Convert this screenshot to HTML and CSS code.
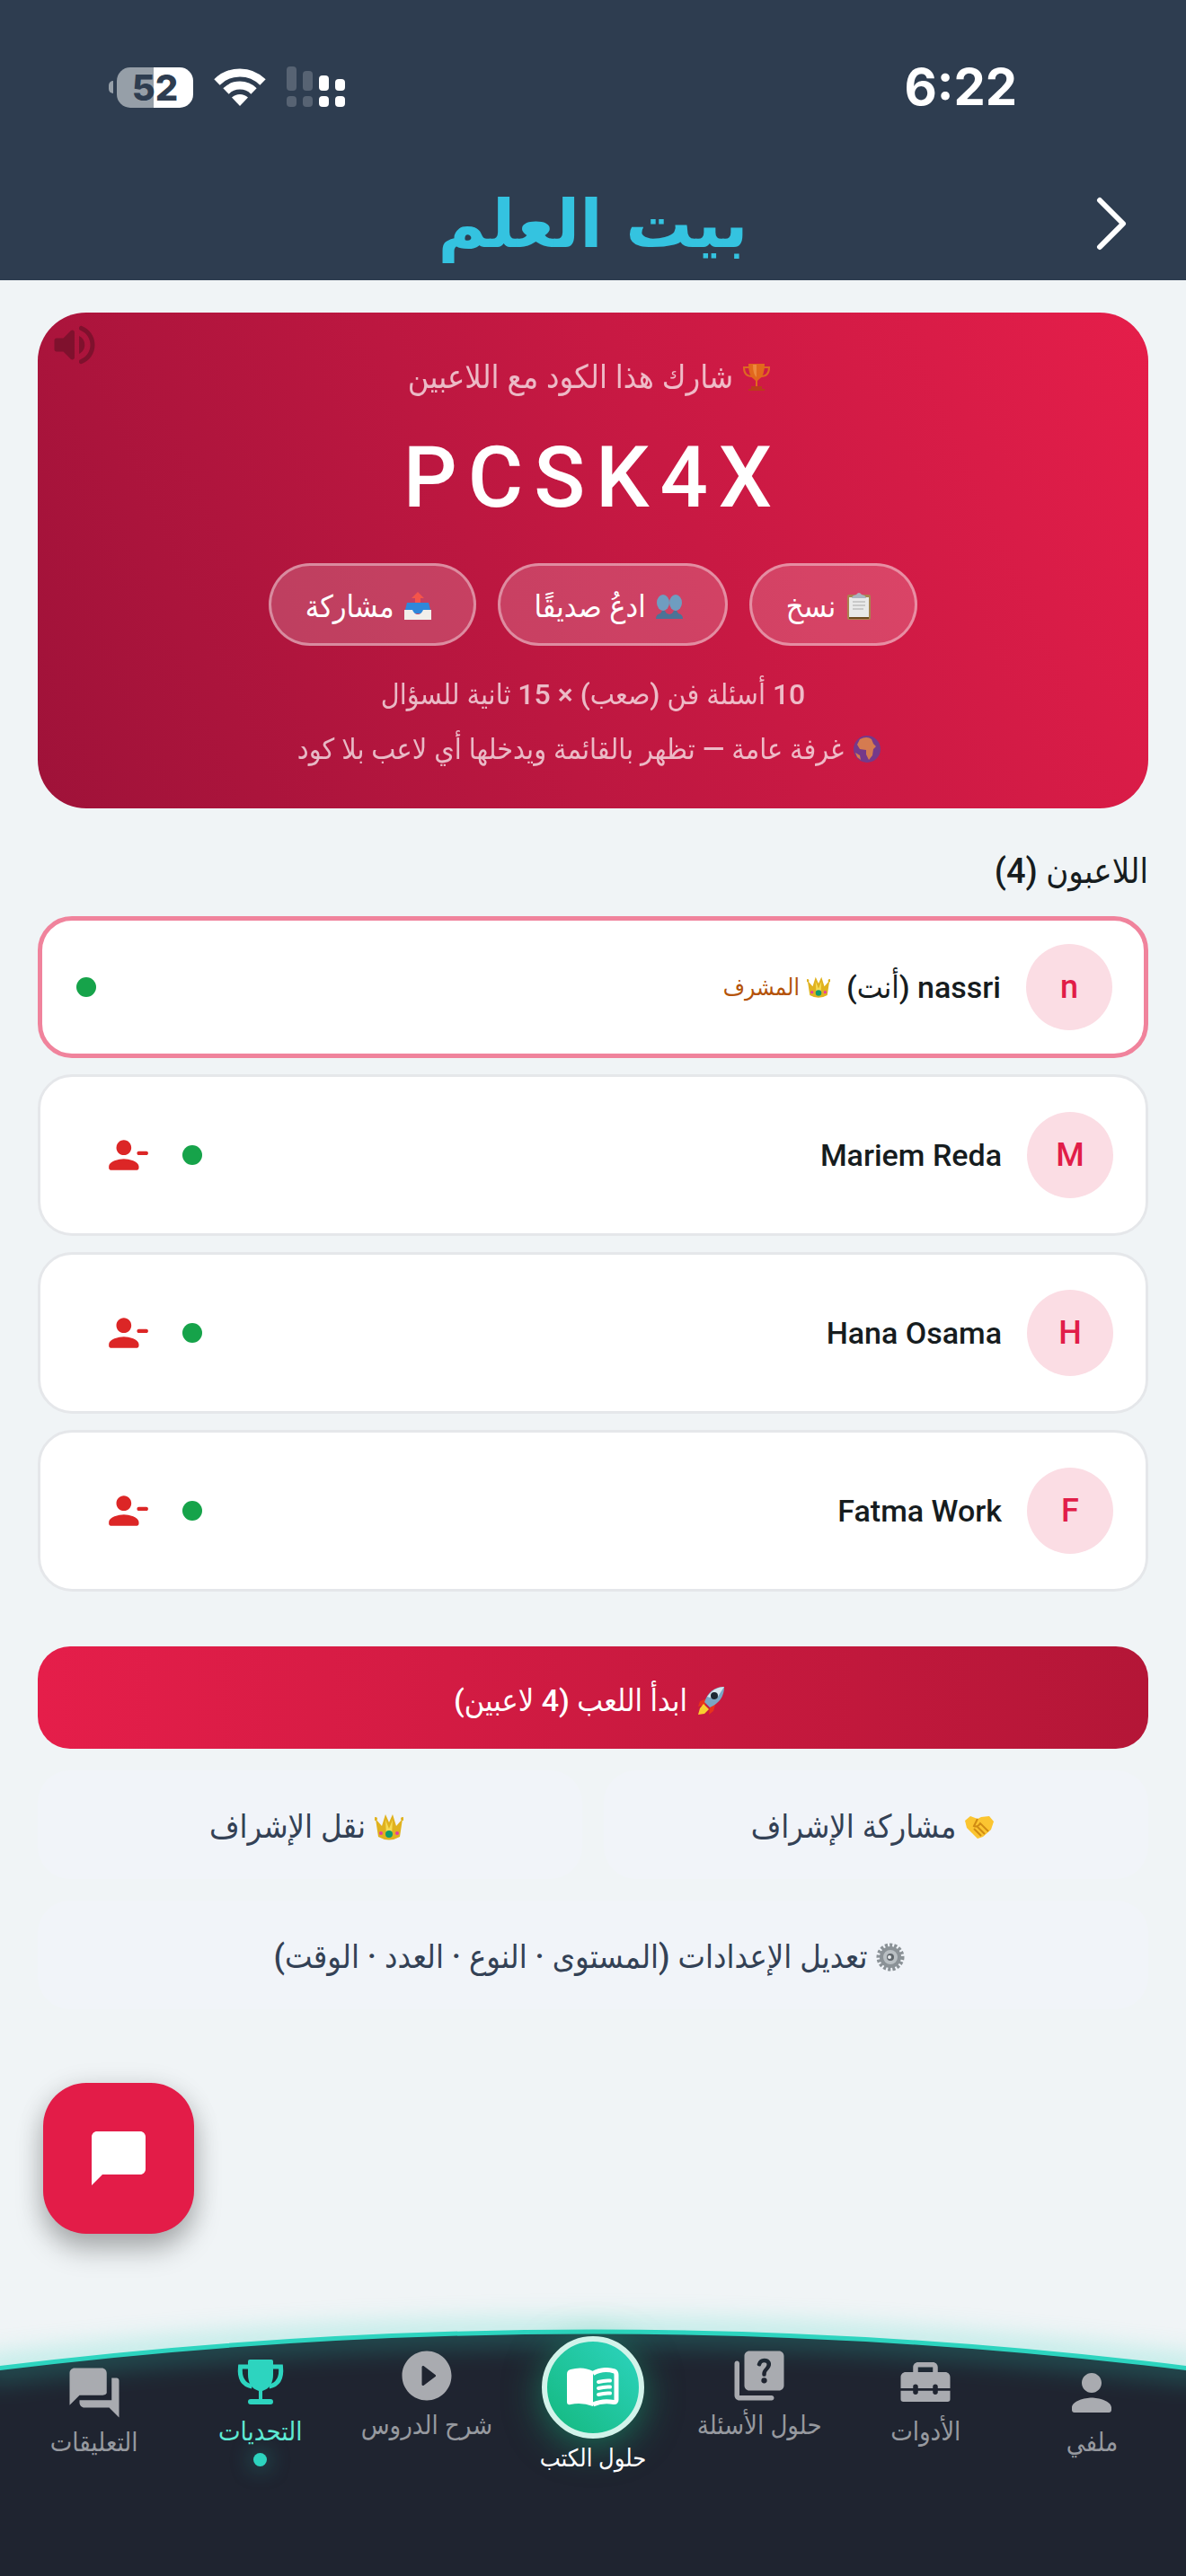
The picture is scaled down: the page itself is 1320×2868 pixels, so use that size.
FILE: index.html
```html
<!DOCTYPE html>
<html lang="ar" dir="rtl">
<head>
    <meta charset="UTF-8">
    <meta name="viewport" content="width=device-width, initial-scale=1.0">
    <title>بيت العلم</title>
    <link rel="stylesheet" href="styles.css">
</head>
<body>
    <!-- emoji drawings shared by the buttons and captions -->
    <svg class="sprite" aria-hidden="true">
        <symbol id="e-trophy" viewBox="0 0 32 32">
            <path d="M8 5H2q0 10 9 10M24 5h6q0 10-9 10" fill="none" stroke="#e58a12" stroke-width="2"/>
            <path d="M7 1h18q0 14-6 17l-2 2v6h-2v-6l-2-2Q7 15 7 1z" fill="#ea8a0c"/>
            <path d="M12 2h4v14q-4-3-4-14z" fill="#fbb83a"/>
            <path d="M10 26h12v3H10zM7 29h18v2H7z" fill="#b4480c"/>
        </symbol>
        <symbol id="e-clipboard" viewBox="0 0 32 32">
            <rect x="3" y="3" width="26" height="28" rx="2" fill="#a9834f"/>
            <path d="M5 6h22v22H5z" fill="#e9e9e9"/>
            <path d="M9 11h14M9 15h14M9 19h12" stroke="#c9c9c9" stroke-width="2"/>
            <path d="M8 7q0-3 5-4 3-4 6 0 5 1 5 4z" fill="#aab4bf"/>
            <path d="M5 28h22v2H5z" fill="#6e4a20"/>
        </symbol>
        <symbol id="e-people" viewBox="0 0 32 32">
            <g fill="#6f9dc0">
                <ellipse cx="9" cy="12" rx="7" ry="9"/>
                <ellipse cx="23" cy="12" rx="7" ry="9"/>
            </g>
            <path d="M1 30q0-5 5-6l2-3h3l2 3 3 1 3-1 2-3h3l2 3q5 1 5 6z" fill="#4c7396"/>
        </symbol>
        <symbol id="e-outbox" viewBox="0 0 32 32">
            <path d="M4 12h24l3 12H1z" fill="#2f87da"/>
            <path d="M1 20h9q2 5 6 5t6-5h9v11H1z" fill="#f1efeb"/>
            <path d="M16 0l7 7h-4v5h-6V7H9z" fill="#f5544a"/>
        </symbol>
        <symbol id="e-globe" viewBox="0 0 32 32">
            <circle cx="16" cy="16" r="15" fill="#5147a8"/>
            <path d="M8 5q8-4 13 0l2 5 3 3-3 3-1 7-4 5-3-6v-5l-7-1-3-5z" fill="#d9a556"/>
            <path d="M3 20l2 5 4 3-1-5z" fill="#d9a556"/>
        </symbol>
        <symbol id="e-crown" viewBox="0 0 32 32">
            <path d="M1 7l7 8 4-13 4 9 4-9 4 13 7-8-3 20q-12 7-24 0z" fill="#e0b21f"/>
            <path d="M12 8l4 10 4-10-1 17h-6z" fill="#f6dc55"/>
            <circle cx="16" cy="24" r="4" fill="#0f9d6e"/>
            <circle cx="7" cy="23" r="2" fill="#e63ca4"/>
            <circle cx="25" cy="23" r="2" fill="#e63ca4"/>
            <circle cx="1" cy="7" r="2" fill="#e0b21f"/>
            <circle cx="31" cy="7" r="2" fill="#e0b21f"/>
        </symbol>
        <symbol id="e-rocket" viewBox="0 0 32 32">
            <path d="M4 17l8-3-2 7-8 2zM15 22l7-4-3 10-5 4z" fill="#e8331c"/>
            <path d="M8 20l6 6-5 5-7 1 2-7z" fill="#f9cf2e"/>
            <path d="M31 1Q15 1 9 18l6 6Q31 17 31 1z" fill="#7ba6c4"/>
            <path d="M31 1Q20 1 12 12l10 3z" fill="#d5e4ec"/>
            <circle cx="20" cy="11" r="4" fill="#1c2733"/>
        </symbol>
        <symbol id="e-hands" viewBox="0 0 32 32">
            <path d="M0 9l6-5 8 3 4-2 9-1 5 6-3 9-9 8-6 2-6-6-6-6z" fill="#fbc531"/>
            <path d="M14 7l-4 8q4 2 7-3l9 9M10 18l8 8M14 16l8 8" fill="none" stroke="#d08b13" stroke-width="2"/>
        </symbol>
        <symbol id="e-gear" viewBox="0 0 32 32">
            <circle cx="16" cy="16" r="13" fill="none" stroke="#8b9297" stroke-width="5" stroke-dasharray="3 2"/>
            <circle cx="16" cy="16" r="10" fill="#b9bfc3" stroke="#8b9297" stroke-width="4"/>
            <circle cx="16" cy="16" r="4" fill="#5f666b"/>
            <circle cx="15" cy="16" r="2" fill="#e9edef"/>
        </symbol>
        <symbol id="i-kick" viewBox="0 0 24 24">
            <path d="M14 8c0-2.21-1.79-4-4-4S6 5.79 6 8s1.79 4 4 4 4-1.79 4-4zM2 18v1c0 .55.45 1 1 1h14c.55 0 1-.45 1-1v-1c0-2.66-5.33-4-8-4s-8 1.34-8 4zM18 10h4c.55 0 1 .45 1 1s-.45 1-1 1h-4c-.55 0-1-.45-1-1s.45-1 1-1z"/>
        </symbol>
    </svg>

    <header class="topbar">
        <div class="status">
            <span class="time">6:22</span>
            <div class="indicators">
                <svg class="signal" viewBox="0 0 66 46" aria-hidden="true">
                    <g fill="#fff" fill-opacity=".2">
                        <rect x="0" y="0" width="11" height="27" rx="4"/>
                        <rect x="18" y="5" width="11" height="22" rx="4"/>
                        <rect x="0" y="33" width="11" height="12" rx="4"/>
                        <rect x="18" y="33" width="11" height="12" rx="4"/>
                    </g>
                    <g fill="#fff">
                        <rect x="36" y="10" width="11" height="17" rx="4"/>
                        <rect x="54" y="14" width="11" height="13" rx="4"/>
                        <rect x="36" y="33" width="11" height="12" rx="4"/>
                        <rect x="54" y="33" width="11" height="12" rx="4"/>
                    </g>
                </svg>
                <svg class="wifi" viewBox="0 0 58 44" aria-hidden="true">
                    <g fill="none" stroke="#fff" stroke-width="9">
                        <path d="M3.500 16.500a36 36 0 0 1 51 0"/>
                        <path d="M13.500 26.500a22 22 0 0 1 31 0"/>
                    </g>
                    <path d="M29 43l-9-9.500a13 13 0 0 1 18 0z" fill="#fff"/>
                </svg>
                <div class="battery"><span class="battery-cap"></span><span class="battery-body">52</span></div>
            </div>
        </div>
        <div class="title-row">
            <button class="back" type="button" aria-label="رجوع">
                <svg viewBox="0 0 36 60" aria-hidden="true"><path d="M4 4l26 26L4 56" fill="none" stroke="#fff" stroke-width="6" stroke-linecap="round" stroke-linejoin="round"/></svg>
            </button>
            <h1>بيت العلم</h1>
        </div>
    </header>

    <main>
        <section class="code-card">
            <button class="sound" type="button" aria-label="الصوت">
                <svg viewBox="0 0 24 24" aria-hidden="true"><path d="M3 10v4c0 .55.45 1 1 1h3l3.290 3.290c.63.63 1.710.18 1.710-.71V6.410c0-.89-1.080-1.340-1.710-.71L7 9H4c-.55 0-1 .45-1 1zm13.500 2A4.500 4.500 0 0 0 14 7.970v8.050c1.480-.73 2.500-2.250 2.500-4.020zM14 4.450v.2c0 .38.25.71.6.85C17.180 6.530 19 9.060 19 12s-1.820 5.470-4.400 6.500c-.36.14-.6.47-.6.85v.2c0 .63.63 1.070 1.210.85C18.600 19.110 21 15.840 21 12s-2.400-7.110-5.790-8.400c-.58-.23-1.210.22-1.210.85z"/></svg>
            </button>
            <p class="hint"><svg class="emoji" aria-hidden="true"><use href="#e-trophy"/></svg>شارك هذا الكود مع اللاعبين</p>
            <p class="code" dir="ltr">PCSK4X</p>
            <div class="pills">
                <button class="pill" type="button"><svg class="emoji" aria-hidden="true"><use href="#e-clipboard"/></svg>نسخ</button>
                <button class="pill" type="button"><svg class="emoji" aria-hidden="true"><use href="#e-people"/></svg>ادعُ صديقًا</button>
                <button class="pill" type="button"><svg class="emoji" aria-hidden="true"><use href="#e-outbox"/></svg>مشاركة</button>
            </div>
            <p class="hint rules">10 أسئلة فن (صعب) × 15 ثانية للسؤال</p>
            <p class="hint room"><svg class="emoji" aria-hidden="true"><use href="#e-globe"/></svg>غرفة عامة — تظهر بالقائمة ويدخلها أي لاعب بلا كود</p>
        </section>

        <h2>اللاعبون (4)</h2>
        <ul class="players">
            <li class="player me">
                <span class="avatar">n</span>
                <span class="name">nassri (أنت)</span>
                <span class="host"><svg class="emoji" aria-hidden="true"><use href="#e-crown"/></svg>المشرف</span>
                <span class="online"></span>
            </li>
            <li class="player">
                <span class="avatar">M</span>
                <span class="name">Mariem Reda</span>
                <span class="online"></span>
                <button class="kick" type="button" aria-label="إزالة"><svg aria-hidden="true"><use href="#i-kick"/></svg></button>
            </li>
            <li class="player">
                <span class="avatar">H</span>
                <span class="name">Hana Osama</span>
                <span class="online"></span>
                <button class="kick" type="button" aria-label="إزالة"><svg aria-hidden="true"><use href="#i-kick"/></svg></button>
            </li>
            <li class="player">
                <span class="avatar">F</span>
                <span class="name">Fatma Work</span>
                <span class="online"></span>
                <button class="kick" type="button" aria-label="إزالة"><svg aria-hidden="true"><use href="#i-kick"/></svg></button>
            </li>
        </ul>

        <button class="start" type="button"><svg class="emoji" aria-hidden="true"><use href="#e-rocket"/></svg>ابدأ اللعب (4 لاعبين)</button>
        <div class="actions">
            <button class="action" type="button"><svg class="emoji" aria-hidden="true"><use href="#e-hands"/></svg>مشاركة الإشراف</button>
            <button class="action" type="button"><svg class="emoji" aria-hidden="true"><use href="#e-crown"/></svg>نقل الإشراف</button>
            <button class="action wide" type="button"><svg class="emoji" aria-hidden="true"><use href="#e-gear"/></svg>تعديل الإعدادات (المستوى · النوع · العدد · الوقت)</button>
        </div>

        <button class="fab" type="button" aria-label="المحادثة">
            <svg viewBox="0 0 24 24" aria-hidden="true"><path d="M20 2H4c-1.100 0-2 .9-2 2v18l4-4h14c1.100 0 2-.9 2-2V4c0-1.100-.9-2-2-2z"/></svg>
        </button>
    </main>

    <nav class="tabbar">
        <svg class="curve" viewBox="0 0 1320 275" preserveAspectRatio="none" aria-hidden="true">
            <path class="curve-fill" d="M0 44Q660-40 1320 44V275H0z"/>
            <path class="curve-glow" d="M-20 46Q660-40 1340 46"/>
            <path class="curve-line" d="M-20 46Q660-40 1340 46"/>
        </svg>
        <a class="tab edge" href="#">
            <svg viewBox="0 0 24 24" aria-hidden="true"><path d="M12 12c2.210 0 4-1.790 4-4s-1.790-4-4-4-4 1.790-4 4 1.790 4 4 4zm0 2c-2.670 0-8 1.340-8 4v1c0 .55.45 1 1 1h14c.55 0 1-.45 1-1v-1c0-2.660-5.330-4-8-4z"/></svg>
            <span>ملفي</span>
        </a>
        <a class="tab mid" href="#">
            <svg viewBox="0 0 24 24" aria-hidden="true"><path d="M17 16.200c0 .5-.4.9-1 .9s-1-.4-1-.9v-.7H9v.7c0 .5-.4.9-1 .9s-1-.4-1-.9v-.7H2V19c0 .6.4 1 1 1h18c.6 0 1-.4 1-1v-3.500h-5zM20 8h-3V6c0-1.100-.9-2-2-2H9c-1.100 0-2 .9-2 2v2H4c-1.100 0-2 .9-2 2v4.500h5v-.7c0-.5.4-.9 1-.9s1 .4 1 .9v.7h6v-.7c0-.5.4-.9 1-.9s1 .4 1 .9v.7h5V10c0-1.100-.9-2-2-2zM9 6h6v2H9z"/></svg>
            <span>الأدوات</span>
        </a>
        <a class="tab" href="#">
            <svg viewBox="0 0 24 24" aria-hidden="true"><path d="M3 6c-.55 0-1 .45-1 1v13c0 1.100.9 2 2 2h13c.55 0 1-.45 1-1s-.45-1-1-1H4V7c0-.55-.45-1-1-1z"/><path fill-rule="evenodd" d="M20 2H8c-1.100 0-2 .9-2 2v12c0 1.100.9 2 2 2h12c1.100 0 2-.9 2-2V4c0-1.100-.9-2-2-2zm-6 13.100a1.100 1.100 0 1 1 0-2.300 1.100 1.100 0 0 1 0 2.300zm1.900-5.700c-.7.9-1.100 1.100-1.100 2.100a.8.8 0 0 1-1.600 0c0-1.500.6-2 1.400-3 .7-.8.7-1.900-.6-1.900-.8 0-1 .4-1.200.9a.8.8 0 1 1-1.500-.5C11.700 5.800 12.600 5 14 5c2.700 0 3.600 2.400 1.900 4.400z"/></svg>
            <span>حلول الأسئلة</span>
        </a>
        <a class="tab books" href="#">
            <span class="bubble">
                <svg viewBox="0 0 58 44" aria-hidden="true">
                    <path d="M0 7q0-4 4-5Q18-2 29 4v39Q16 38 4 41 0 42 0 38z" fill="#fff"/>
                    <path d="M29 6.500Q40 0 53 4q2 1 2 4v28q0 3-3 2.500Q40 36 29 41" fill="none" stroke="#fff" stroke-width="5"/>
                    <path d="M35 16q7-2 13-1.500M35 23q7-2 13-1.500M35 30q7-2 13-1.500" fill="none" stroke="#fff" stroke-width="4" stroke-linecap="round"/>
                </svg>
            </span>
            <span>حلول الكتب</span>
        </a>
        <a class="tab" href="#">
            <svg viewBox="0 0 24 24" aria-hidden="true"><path d="M12 2C6.480 2 2 6.480 2 12s4.480 10 10 10 10-4.480 10-10S17.520 2 12 2zm-2 13.500v-7c0-.41.47-.65.8-.4l4.670 3.500c.27.2.27.6 0 .8l-4.670 3.500c-.33.25-.8.010-.8-.4z"/></svg>
            <span>شرح الدروس</span>
        </a>
        <a class="tab mid active" href="#">
            <svg viewBox="-8 -8 66 66" aria-hidden="true"><path d="M12 8H2.500q-2 19 13 22M38 8h9.500q2 19-13 22" fill="none" stroke="currentColor" stroke-width="5"/><path d="M11 2q0-2 2-2h24q2 0 2 2v15q0 14-12 18v9h9q3 0 3 3t-3 3H14q-3 0-3-3t3-3h9v-9Q11 31 11 17z"/></svg>
            <span>التحديات</span>
            <i class="dot"></i>
        </a>
        <a class="tab edge" href="#">
            <svg viewBox="0 0 24 24" aria-hidden="true"><path d="M21 6h-2v9H6v1c0 1.100.9 2 2 2h10l4 4V7c0-.55-.45-1-1-1zm-4 6V4c0-1.100-.9-2-2-2H4c-1.100 0-2 .9-2 2v13l4-4h9c1.100 0 2-.45 2-1z"/></svg>
            <span>التعليقات</span>
        </a>
    </nav>
</body>
</html>
```
FILE: styles.css
```css
* {
    box-sizing: border-box;
}
body {
    margin: 0;
    min-height: 100vh;
    display: flex;
    flex-direction: column;
    background: #f0f4f6;
    color: #161c1e;
    font-family: Roboto, "DejaVu Sans Condensed", "DejaVu Sans", sans-serif;
    font-weight: 500;
    font-size: 34px;
}
h1, h2, p, ul {
    margin: 0;
    padding: 0;
}
button {
    font: inherit;
    color: inherit;
    border: none;
    background: none;
    padding: 0;
    cursor: pointer;
}
svg {
    display: block;
}
.sprite {
    position: absolute;
    width: 0;
    height: 0;
}
.emoji {
    flex: none;
    width: 32px;
    height: 32px;
    margin-inline-start: 8px;
}

/* header */
.topbar {
    background: #2e3d50;
    padding: 64px 64px 0;
}
.status {
    display: flex;
    justify-content: space-between;
    align-items: center;
    height: 66px;
    padding: 0 124px 0 57px;
    color: #fff;
}
.time {
    font-family: Inter, sans-serif;
    font-weight: 700;
    font-size: 56px;
}
.indicators {
    display: flex;
    align-items: center;
    gap: 23px;
}
.signal {
    width: 66px;
    height: 46px;
}
.wifi {
    width: 58px;
    height: 44px;
}
.battery {
    display: flex;
    flex-direction: row-reverse;
    align-items: center;
    gap: 4px;
}
.battery-cap {
    width: 5px;
    height: 14px;
    border-radius: 5px 0 0 5px;
    background: #969fa8;
}
.battery-body {
    width: 85px;
    height: 45px;
    border-radius: 15px;
    background: linear-gradient(90deg, #969fa8 41px, #fff 41px);
    color: #2e3d50;
    font: 800 40px/45px Inter, sans-serif;
    text-align: center;
}
.title-row {
    display: grid;
    grid-template-columns: 40px 1fr 40px;
    align-items: center;
    height: 182px;
    padding-top: 56px;
}
.back svg {
    width: 36px;
    height: 60px;
}
h1 {
    text-align: center;
    color: #34c3e0;
    font-family: "DejaVu Sans", sans-serif;
    font-size: 74px;
    font-weight: 700;
    line-height: 100px;
}

/* room code */
main {
    flex: 1;
    position: relative;
    padding: 36px 42px 0;
}
.code-card {
    position: relative;
    display: flex;
    flex-direction: column;
    align-items: center;
    padding: 48px 24px 42px;
    border-radius: 54px;
    background: linear-gradient(246deg, #e51e4a, #9f1239);
    color: #fff;
}
.sound {
    position: absolute;
    top: 6px;
    left: 11px;
}
.sound svg {
    width: 60px;
    height: 60px;
    fill: #7f112d;
}
.hint {
    display: flex;
    align-items: center;
    gap: 10px;
    font-size: 36px;
    line-height: 48px;
    opacity: .7;
}
.code {
    font-size: 94px;
    line-height: 132px;
    letter-spacing: 12px;
    margin-top: 22px;
}
.pills {
    display: flex;
    gap: 24px;
    margin: 29px 0 30px;
}
.pill {
    display: flex;
    align-items: center;
    gap: 10px;
    height: 92px;
    padding: 4px 38px 0;
    border: 3px solid rgba(255, 255, 255, .4);
    border-radius: 46px;
    background: rgba(255, 255, 255, .18);
}
.rules, .room {
    font-size: 32px;
}
.room {
    margin-top: 13px;
}

/* players */
h2 {
    margin-top: 40px;
    font-size: 38px;
    font-weight: 500;
    line-height: 60px;
}
.players {
    display: grid;
    gap: 18px;
    margin-top: 20px;
    list-style: none;
}
.player {
    display: flex;
    align-items: center;
    padding: 26px 36px;
    border: 3px solid #e5e7ea;
    border-radius: 38px;
    background: #fff;
}
.player.me {
    border: 5px solid #f0839c;
    padding: 26px 35px 26px 38px;
}
.avatar {
    width: 96px;
    height: 96px;
    border-radius: 50%;
    background: #fbdde4;
    color: #e11d48;
    font-size: 36px;
    line-height: 96px;
    text-align: center;
}
.name {
    margin-inline-start: 28px;
}
.host {
    display: flex;
    align-items: center;
    gap: 8px;
    margin-inline-start: 10px;
    color: #b45309;
    font-size: 26px;
}
.host .emoji {
    width: 26px;
    height: 26px;
}
.online {
    width: 22px;
    height: 22px;
    margin-inline-start: auto;
    border-radius: 50%;
    background: #16a34a;
}
.kick {
    display: grid;
    place-items: center;
    width: 122px;
    height: 122px;
}
.kick svg {
    width: 50px;
    height: 50px;
    fill: #dc2626;
}

/* actions */
.start {
    display: flex;
    align-items: center;
    justify-content: center;
    gap: 10px;
    width: 100%;
    height: 114px;
    margin-top: 61px;
    padding-top: 6px;
    border-radius: 36px;
    background: linear-gradient(90deg, #e51e4a, #b41637);
    color: #fff;
}
.actions {
    display: grid;
    grid-template-columns: 1fr 1fr;
    gap: 24px;
    margin-top: 24px;
}
.action {
    display: flex;
    align-items: center;
    justify-content: center;
    gap: 10px;
    height: 121px;
    padding-top: 4px;
    border-radius: 36px;
    background: #f1f4f9;
    color: #334155;
    font-size: 36px;
}
.wide {
    grid-column: span 2;
}
.fab {
    position: absolute;
    left: 48px;
    bottom: 106px;
    display: grid;
    place-items: center;
    width: 168px;
    height: 168px;
    border-radius: 48px;
    background: #e31c48;
    box-shadow: 0 18px 30px rgba(0, 0, 0, .25), 0 4px 30px rgba(0, 0, 0, .12);
}
.fab svg {
    width: 72px;
    height: 72px;
    fill: #fff;
}

/* bottom tabs */
.tabbar {
    position: relative;
    display: grid;
    grid-template-columns: repeat(7, 1fr);
    height: 275px;
    padding: 19px 12px 0;
}
.curve {
    position: absolute;
    inset: 0;
    width: 100%;
    height: 100%;
    overflow: visible;
}
.curve-fill {
    fill: #1f2430;
}
.curve-glow, .curve-line {
    fill: none;
    stroke: #2dd4bf;
}
.curve-glow {
    stroke-width: 30;
    opacity: .25;
    filter: blur(14px);
}
.curve-line {
    stroke-width: 5;
}
.tab {
    position: relative;
    display: flex;
    flex-direction: column;
    align-items: center;
    color: #96999f;
    font-size: 29px;
    font-weight: 400;
    line-height: 44px;
    white-space: nowrap;
    text-decoration: none;
}
.tab > svg {
    width: 66px;
    height: 66px;
    fill: #a9abb0;
}
.mid {
    padding-top: 7px;
}
.edge {
    padding-top: 19px;
}
.active {
    color: #5eead4;
}
.tab.active > svg {
    fill: #2dd4bf;
    color: #2dd4bf;
}
.dot {
    width: 15px;
    height: 15px;
    margin-top: 2px;
    border-radius: 50%;
    background: #2dd4bf;
    box-shadow: 0 0 24px rgba(45, 212, 191, .6);
}
.books {
    margin-top: -11px;
    color: #fff;
    font-size: 27px;
}
.bubble {
    display: grid;
    place-items: center;
    width: 114px;
    height: 114px;
    border: 6px solid #d2f3ea;
    border-radius: 50%;
    background: linear-gradient(225deg, #2dd4bf, #14b87e);
    box-shadow: 0 8px 40px rgba(20, 184, 126, .5);
}
.bubble svg {
    width: 58px;
    height: 44px;
}
```
